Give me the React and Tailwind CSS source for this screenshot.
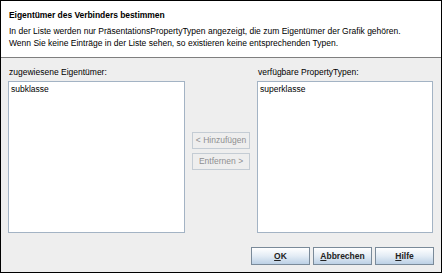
import React from "react";

const font = { fontFamily: '"Liberation Sans", Arial, sans-serif' };

const DialogButton = ({ label }) => (
  <button className="w-[59px] h-[18px] border border-[#7a8a99] bg-gradient-to-b from-[#ffffff] via-[#e3ecf5] to-[#bcd0e5] text-[8.5px] font-bold text-[#222] leading-none">
    <span className="underline">{label.charAt(0)}</span>
    {label.slice(1)}
  </button>
);

const MoveButton = ({ label }) => (
  <button
    disabled
    className="w-[58px] h-[17px] border border-[#c4ccd4] bg-[#eeeeee] text-[8.5px] text-[#8e8f91] leading-none whitespace-nowrap"
  >
    {label}
  </button>
);

const ListBox = ({ items }) => (
  <div className="h-[152px] bg-white border border-[#a3b3c4] px-[2px] pt-[2px]">
    {items.map((item) => (
      <div key={item} className="text-[8.5px] leading-[11px] text-black">
        {item}
      </div>
    ))}
  </div>
);

export default function App() {
  return (
    <div
      style={font}
      className="w-[442px] h-[273px] border border-black bg-[#eeeeee] flex flex-col overflow-hidden"
    >
      <div className="h-[57px] shrink-0 bg-white border-b border-[#7f7f7f] pl-[8px] pt-[9px] whitespace-nowrap">
        <div className="text-[8.5px] font-bold leading-[11px] tracking-[-0.05px] text-black">
          Eigentümer des Verbinders bestimmen
        </div>
        <div className="mt-[4px] text-[8.5px] leading-[12px] text-black">
          <div>
            In der Liste werden nur PräsentationsPropertyTypen angezeigt, die zum Eigentümer der Grafik gehören.
          </div>
          <div>
            Wenn Sie keine Einträge in der Liste sehen, so existieren keine entsprechenden Typen.
          </div>
        </div>
      </div>

      <div className="flex pl-[7px] pr-[8px] pt-[9px]">
        <div className="w-[177px]">
          <div className="text-[8.5px] leading-[11px] mb-[3px] pl-[1px] text-black">
            zugewiesene Eigentümer:
          </div>
          <ListBox items={["subklasse"]} />
        </div>

        <div className="flex-1 flex flex-col items-center justify-center gap-[4px] pt-[2px]">
          <MoveButton label="< Hinzufügen" />
          <MoveButton label="Entfernen >" />
        </div>

        <div className="w-[176px]">
          <div className="text-[8.5px] leading-[11px] mb-[3px] pl-[1px] text-black">
            verfügbare PropertyTypen:
          </div>
          <ListBox items={["superklasse"]} />
        </div>
      </div>

      <div className="flex justify-end gap-[3px] pr-[7px] pt-[14px]">
        <DialogButton label="OK" />
        <DialogButton label="Abbrechen" />
        <DialogButton label="Hilfe" />
      </div>
    </div>
  );
}
